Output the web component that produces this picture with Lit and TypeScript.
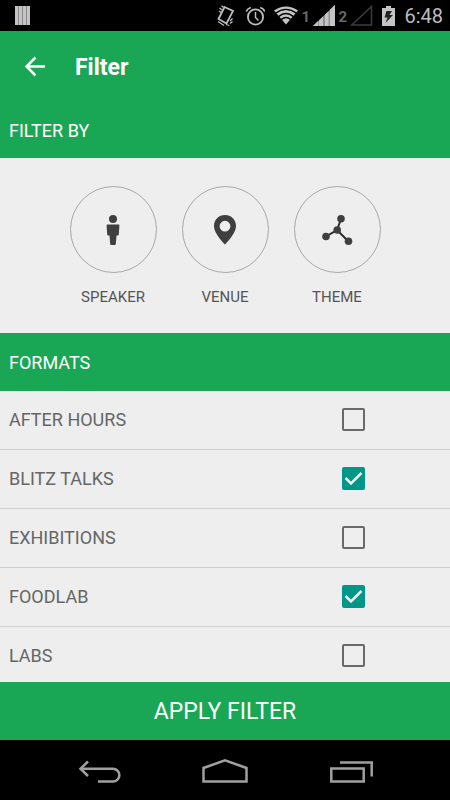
import { LitElement, html, css, svg } from "lit";
import { customElement, state } from "lit/decorators.js";

interface Format {
  name: string;
  checked: boolean;
}

@customElement("status-bar")
class StatusBar extends LitElement {
  static styles = css`
    :host {
      display: flex;
      align-items: center;
      justify-content: space-between;
      height: 31px;
      padding: 0 7px 0 15px;
      background: #000;
      color: #bdbdbd;
    }
    svg {
      display: block;
    }
    .tray,
    .sim {
      display: flex;
      align-items: center;
    }
    .tray {
      gap: 9px;
    }
    .sim {
      gap: 3px;
    }
    .number {
      font: bold 15px/20px Roboto, sans-serif;
      color: #666;
      width: 9px;
      padding-top: 2px;
    }
    .time {
      font: 20px/30px Roboto, sans-serif;
      padding-top: 1px;
    }
  `;

  render() {
    return html`
      <svg width="15" height="19" viewBox="0 0 15 19" aria-hidden="true">
        <path fill="#8a8a8a" d="M0 0h15v19H0z" />
        <path fill="#c4c4c4" d="M0 0h3v19H0zM4 0h3v19H4zM8 0h3v19H8zM12 0h3v19h-3z" />
      </svg>
      <div class="tray">
        <svg width="20" height="22" viewBox="0 0 20 22" fill="none" stroke="#bdbdbd" aria-hidden="true">
          <path stroke-width="1.800" d="M8.500 2 17 6 10.500 18.500 2.500 14z" />
          <path stroke-width="1.300" d="M5.500 .8 7.500 2.500M3.500 3 6 5M3 6 5 7.500M16.500 13.500 14 16M16.500 16.500 14 18.500M13.500 20.500 10 19.500M2 16.500 8 20.500" />
        </svg>
        <svg width="20" height="20" viewBox="0 0 20 20" fill="none" stroke="#bdbdbd" aria-hidden="true">
          <circle cx="10.500" cy="11" r="7.600" stroke-width="1.800" />
          <path stroke-width="1.500" d="M10.500 6v5.500l3 3" />
          <path stroke-width="1.800" d="M1.200 5.500Q2.500 2.500 5.800 1.500M15.200 1.500Q18.500 2.500 19.800 5.500" />
        </svg>
        <div class="sim">
          <svg width="24" height="19" viewBox="0 0 24 19" fill="none" stroke="#000" aria-hidden="true">
            <path fill="#c4c4c4" stroke="none" d="M0 4.500Q12-3.500 24 4.500L12 18.500z" />
            <path stroke-width="1.400" d="M1.500 7.200Q12-.5 22.500 7.200M4.500 10.600Q12 4.500 19.500 10.600M7.200 13.600Q12 9.500 16.800 13.600" />
          </svg>
          <span class="number">1</span>
          <svg width="22" height="21" viewBox="0 0 22 21" aria-hidden="true">
            <path fill="#8f8f8f" d="M0 21 22 0v21z" />
            <path fill="#c4c4c4" d="M0 21 5 16v5zM6 15.300 10 11.500v9.500H6zM12 9.500 15.500 6.200V21H12zM17 4.800 22 0v21h-5z" />
          </svg>
          <span class="number">2</span>
          <svg width="23" height="21" viewBox="0 0 23 21" fill="none" stroke="#3c3c3c" aria-hidden="true">
            <path stroke-width="1.500" d="M1.800 20 21.500 1.500V20z" />
          </svg>
        </div>
        <svg width="13" height="20" viewBox="0 0 13 20" aria-hidden="true">
          <path fill="#c4c4c4" d="M4 0h5v2h4v18H0V2h4z" />
          <path fill="#222" d="M4.500 5H10L7.500 9H11L3.500 17 5.500 11.500H2.500z" />
        </svg>
        <span class="time">6:48</span>
      </div>
    `;
  }
}

@customElement("nav-bar")
class NavBar extends LitElement {
  static styles = css`
    :host {
      display: flex;
      justify-content: center;
      align-items: center;
      gap: 78px;
      height: 60px;
      background: #000;
    }
    button {
      display: block;
      padding: 0;
      border: 0;
      background: none;
      cursor: pointer;
    }
    svg {
      display: block;
      fill: none;
      stroke: #a0a0a0;
      stroke-width: 2.500;
    }
  `;

  render() {
    return html`
      <button aria-label="Back">
        <svg width="48" height="28" viewBox="0 0 48 28">
          <path d="M6 12.700H38a6.400 6.400 0 0 1 0 12.800H23" />
          <path d="M13 5.500 5.500 12.700 13 20" />
        </svg>
      </button>
      <button aria-label="Home">
        <svg width="48" height="28" viewBox="0 0 48 28">
          <path d="M2.500 25.500V12L24 4.300 45.500 12V25.500z" />
        </svg>
      </button>
      <button aria-label="Recent apps">
        <svg width="48" height="28" viewBox="0 0 48 28">
          <path d="M4.300 12.500H36.700V25.500H4.300zM13 6.500H44.700V20.500" />
        </svg>
      </button>
    `;
  }
}

const filterIcons = {
  speaker: svg`
    <circle cx="16" cy="5" r="4" />
    <path d="M10.500 10.500H21.500Q22.500 10.500 22.400 11.500L21.800 20.500Q21.700 21.500 20.700 21.500H19.500L18.800 30Q18.700 31 17.700 31H14.300Q13.300 31 13.200 30L12.500 21.500H11.300Q10.300 21.500 10.200 20.500L9.600 11.500Q9.500 10.500 10.500 10.500z" />
  `,
  venue: svg`
    <path fill-rule="evenodd" d="M16 1C9.700 1 5 5.800 5 12c0 8 11 18.500 11 18.500s11-10.500 11-18.500C27 5.800 22.300 1 16 1zM16 6.800a5.400 5.400 0 1 1 0 10.800 5.400 5.400 0 0 1 0-10.800z" />
  `,
  theme: svg`
    <path fill="none" stroke="#2b2b2b" stroke-width="2" d="M20 5 16 16 5 22.500M16 16 27.500 27.500" />
    <circle cx="20" cy="4.800" r="3.800" />
    <circle cx="16.200" cy="16" r="3.800" />
    <circle cx="5" cy="22.500" r="3.800" />
    <circle cx="27.500" cy="27.200" r="3.800" />
  `,
};

@customElement("app-root")
class AppRoot extends LitElement {
  static styles = css`
    :host {
      display: flex;
      flex-direction: column;
      height: 100vh;
      background: #eee;
      font-family: Roboto, sans-serif;
    }
    status-bar,
    nav-bar,
    header,
    .section,
    .filters,
    .apply {
      flex: none;
    }
    svg {
      display: block;
    }
    button {
      font-family: inherit;
      border: 0;
      cursor: pointer;
    }
    header {
      display: flex;
      align-items: center;
      gap: 28px;
      height: 71px;
      padding-left: 23px;
      background: #1aa755;
      color: #fff;
    }
    .back {
      padding: 0;
      background: none;
    }
    h1 {
      margin: 0;
      padding-top: 2px;
      font-size: 23px;
      line-height: 28px;
      font-weight: 700;
    }
    .section {
      margin: 0;
      padding: 2px 9px 0;
      background: #1aa755;
      color: #fff;
      font-size: 18px;
      line-height: 56px;
      font-weight: 400;
    }
    .section.first {
      line-height: 54px;
    }
    .filters {
      display: flex;
      justify-content: center;
      gap: 25px;
      padding: 28px 0 26px;
    }
    .filter {
      display: flex;
      flex-direction: column;
      align-items: center;
      gap: 14px;
      width: 87px;
      padding: 0;
      background: none;
      color: #555;
      font-size: 15px;
      line-height: 20px;
    }
    .circle {
      box-sizing: border-box;
      display: grid;
      place-items: center;
      width: 87px;
      height: 87px;
      border: 1px solid #a8a8a8;
      border-radius: 50%;
      fill: #3f3f3f;
    }
    .list {
      flex: 1;
      min-height: 0;
      margin: 0;
      padding: 0;
      list-style: none;
      overflow-y: auto;
      scrollbar-width: none;
    }
    .row {
      box-sizing: border-box;
      display: flex;
      align-items: center;
      justify-content: space-between;
      height: 59px;
      padding: 0 85px 0 9px;
      border-bottom: 1px solid #cecece;
      color: #666;
      font-size: 18px;
      line-height: 24px;
    }
    input {
      appearance: none;
      box-sizing: border-box;
      width: 23px;
      height: 23px;
      margin: 0;
      border: 2px solid #696969;
      border-radius: 2px;
    }
    input:checked {
      border: 0;
      background: #009688;
    }
    .box {
      display: grid;
      padding-bottom: 1px;
    }
    .box > * {
      grid-area: 1 / 1;
    }
    .tick {
      pointer-events: none;
      fill: none;
      stroke: #eee;
      stroke-width: 2.500;
    }
    .apply {
      padding: 2px 0 0;
      background: #1aa755;
      color: #fff;
      font-size: 23px;
      line-height: 56px;
    }
  `;

  @state() private formats: Format[] = [
    { name: "AFTER HOURS", checked: false },
    { name: "BLITZ TALKS", checked: true },
    { name: "EXHIBITIONS", checked: false },
    { name: "FOODLAB", checked: true },
    { name: "LABS", checked: false },
  ];

  private toggle(index: number) {
    this.formats = this.formats.map((f, i) => (i === index ? { ...f, checked: !f.checked } : f));
  }

  private filter(label: string, icon: unknown) {
    return html`
      <button class="filter">
        <span class="circle">
          <svg width="32" height="32" viewBox="0 0 32 32" aria-hidden="true">${icon}</svg>
        </span>
        <span>${label}</span>
      </button>
    `;
  }

  render() {
    return html`
      <status-bar></status-bar>
      <header>
        <button class="back" aria-label="Back">
          <svg width="24" height="24" viewBox="0 0 24 24" fill="none" stroke="#fff" stroke-width="2.500">
            <path d="M22 11.500H4M12.500 2.500 3.500 11.500 12.500 20.500" />
          </svg>
        </button>
        <h1>Filter</h1>
      </header>
      <h2 class="section first">FILTER BY</h2>
      <div class="filters">
        ${this.filter("SPEAKER", filterIcons.speaker)}
        ${this.filter("VENUE", filterIcons.venue)}
        ${this.filter("THEME", filterIcons.theme)}
      </div>
      <h2 class="section">FORMATS</h2>
      <ul class="list">
        ${this.formats.map(
          (f, i) => html`
            <li>
              <label class="row">
                <span>${f.name}</span>
                <span class="box">
                  <input type="checkbox" .checked=${f.checked} @change=${() => this.toggle(i)} />
                  ${f.checked
                    ? html`<svg class="tick" width="23" height="23" viewBox="0 0 23 23" aria-hidden="true">
                        <path d="M3.500 11 9 16.500 19.500 6" />
                      </svg>`
                    : null}
                </span>
              </label>
            </li>
          `
        )}
      </ul>
      <button class="apply">APPLY FILTER</button>
      <nav-bar></nav-bar>
    `;
  }
}
